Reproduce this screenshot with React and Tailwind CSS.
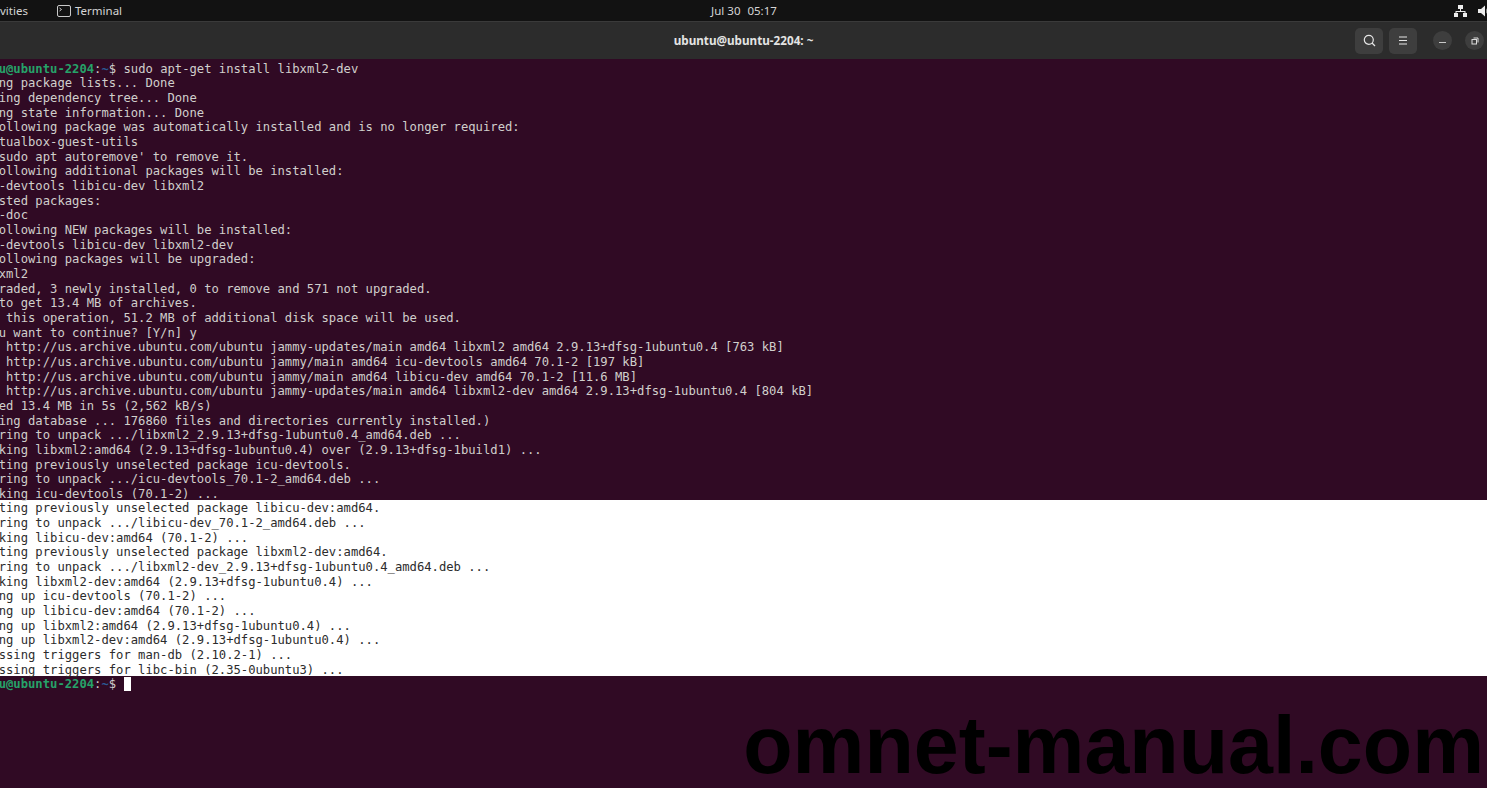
import React from "react";

const dark1 = [
  "Reading package lists... Done",
  "Building dependency tree... Done",
  "Reading state information... Done",
  "The following package was automatically installed and is no longer required:",
  "  virtualbox-guest-utils",
  "Use 'sudo apt autoremove' to remove it.",
  "The following additional packages will be installed:",
  "  icu-devtools libicu-dev libxml2",
  "Suggested packages:",
  "  icu-doc",
  "The following NEW packages will be installed:",
  "  icu-devtools libicu-dev libxml2-dev",
  "The following packages will be upgraded:",
  "  libxml2",
  "1 upgraded, 3 newly installed, 0 to remove and 571 not upgraded.",
  "Need to get 13.4 MB of archives.",
  "After this operation, 51.2 MB of additional disk space will be used.",
  "Do you want to continue? [Y/n] y",
  "Get:1 http://us.archive.ubuntu.com/ubuntu jammy-updates/main amd64 libxml2 amd64 2.9.13+dfsg-1ubuntu0.4 [763 kB]",
  "Get:2 http://us.archive.ubuntu.com/ubuntu jammy/main amd64 icu-devtools amd64 70.1-2 [197 kB]",
  "Get:3 http://us.archive.ubuntu.com/ubuntu jammy/main amd64 libicu-dev amd64 70.1-2 [11.6 MB]",
  "Get:4 http://us.archive.ubuntu.com/ubuntu jammy-updates/main amd64 libxml2-dev amd64 2.9.13+dfsg-1ubuntu0.4 [804 kB]",
  "Fetched 13.4 MB in 5s (2,562 kB/s)",
  "(Reading database ... 176860 files and directories currently installed.)",
  "Preparing to unpack .../libxml2_2.9.13+dfsg-1ubuntu0.4_amd64.deb ...",
  "Unpacking libxml2:amd64 (2.9.13+dfsg-1ubuntu0.4) over (2.9.13+dfsg-1build1) ...",
  "Selecting previously unselected package icu-devtools.",
  "Preparing to unpack .../icu-devtools_70.1-2_amd64.deb ...",
  "Unpacking icu-devtools (70.1-2) ...",
];

const light = [
  "Selecting previously unselected package libicu-dev:amd64.",
  "Preparing to unpack .../libicu-dev_70.1-2_amd64.deb ...",
  "Unpacking libicu-dev:amd64 (70.1-2) ...",
  "Selecting previously unselected package libxml2-dev:amd64.",
  "Preparing to unpack .../libxml2-dev_2.9.13+dfsg-1ubuntu0.4_amd64.deb ...",
  "Unpacking libxml2-dev:amd64 (2.9.13+dfsg-1ubuntu0.4) ...",
  "Setting up icu-devtools (70.1-2) ...",
  "Setting up libicu-dev:amd64 (70.1-2) ...",
  "Setting up libxml2:amd64 (2.9.13+dfsg-1ubuntu0.4) ...",
  "Setting up libxml2-dev:amd64 (2.9.13+dfsg-1ubuntu0.4) ...",
  "Processing triggers for man-db (2.10.2-1) ...",
  "Processing triggers for libc-bin (2.35-0ubuntu3) ...",
];

function Line({ children }) {
  return <div className="h-[14.68px] leading-[14.68px] whitespace-pre">{children}</div>;
}

function Prompt() {
  return (
    <>
      <span className="font-bold text-[#26a269]">ubuntu@ubuntu-2204</span>
      <span className="text-[#d0cfcc]">:</span>
      <span className="font-bold text-[#2a5a96]">~</span>
      <span className="text-[#d0cfcc]">$ </span>
    </>
  );
}

export default function App() {
  return (
    <div className="relative flex h-[788px] w-full flex-col overflow-hidden bg-[#300a24] font-['DejaVu_Sans_Mono',monospace]">
      <div className="grid h-[21px] shrink-0 grid-cols-[1fr_auto_1fr] items-center bg-[#121212] font-['Noto_Sans',sans-serif] text-[11.5px] text-[#d5d5d5]">
        <div className="flex items-center">
          <span className="-ml-[20px] w-[77px]">Activities</span>
          <svg width="14" height="12" viewBox="0 0 14 12" fill="none" className="mr-[4px]">
            <rect x="0.5" y="0.5" width="13" height="11" rx="1.5" stroke="#c9c9c9" />
            <path d="M2.5 3l2 1.5-2 1.5" stroke="#c9c9c9" />
          </svg>
          <span>Terminal</span>
        </div>
        <div className="flex gap-[7px] pl-[1px]">
          <span>Jul 30</span>
          <span>05:17</span>
        </div>
        <div className="-mr-[4px] flex items-center justify-end gap-[11px]">
          <svg width="13" height="12" viewBox="0 0 13 12" fill="#ececec">
            <rect x="4" y="0" width="5" height="4" />
            <rect x="0" y="8" width="4" height="4" />
            <rect x="9" y="8" width="4" height="4" />
            <path d="M6 4h1v2h4.500v2h-1V7H2.500v1h-1V6H6z" />
          </svg>
          <svg width="13" height="12" viewBox="0 0 13 12" fill="#ececec">
            <path d="M0 4h3l4-3.500v11L3 8H0z" />
            <path d="M8.500 3.500c1.200 1.200 1.200 3.800 0 5v-5z" />
          </svg>
        </div>
      </div>

      <div className="relative flex h-[38px] shrink-0 items-center justify-end border-t border-[#3a3a3a] bg-[#2c2c2c] pr-[3px]">
        <span className="absolute left-0 right-0 text-center font-['Noto_Sans',sans-serif] text-[11.7px] font-bold text-[#e4e4e4]">
          ubuntu@ubuntu-2204: ~
        </span>
        <div className="relative flex items-center">
          <div className="flex h-[26px] w-[28px] items-center justify-center rounded-[5px] bg-[#3e3e3e]">
            <svg width="13" height="13" viewBox="0 0 13 13" fill="none" stroke="#e6e6e6" strokeWidth="1.200">
              <circle cx="5.800" cy="5.800" r="4.500" />
              <path d="M9 9l3 3" />
            </svg>
          </div>
          <div className="ml-[6px] flex h-[26px] w-[28px] items-center justify-center rounded-[5px] bg-[#3e3e3e]">
            <svg width="10" height="9" viewBox="0 0 10 9" stroke="#e6e6e6" strokeWidth="1">
              <path d="M1 1h8M1 4.500h8M1 8h8" />
            </svg>
          </div>
          <div className="ml-[16px] flex h-[19px] w-[19px] items-center justify-center rounded-full bg-[#3e3e3e]">
            <div className="mt-[3px] h-[1px] w-[7px] bg-[#c8c8c8]" />
          </div>
          <div className="ml-[13px] flex h-[19px] w-[19px] items-center justify-center rounded-full bg-[#3e3e3e]">
            <svg width="8" height="8" viewBox="0 0 8 8" fill="none" stroke="#dcdcdc">
              <rect x="1" y="2.500" width="4.500" height="4.500" />
              <path d="M2.500 1H7v4.500" />
            </svg>
          </div>
        </div>
      </div>

      <div className="flex-1 overflow-hidden pt-[2.5px] text-[12.19px]">
        <div className="-ml-[38px] text-[#d0cfcc]">
          <Line>
            <Prompt />
            <span>sudo apt-get install libxml2-dev</span>
          </Line>
          {dark1.map((t, i) => (
            <Line key={i}>{t}</Line>
          ))}
        </div>
        <div className="-mt-[2px] h-[176px] bg-white pt-[1.6px] text-[#2c2c2c]">
          <div className="-ml-[38px]">
            {light.map((t, i) => (
              <Line key={i}>{t}</Line>
            ))}
          </div>
        </div>
        <div className="-ml-[38px] pt-[1px]">
          <Line>
            <Prompt />
            <span className="ml-[0.5px] inline-block h-[14.68px] w-[7.35px] bg-white align-top" />
          </Line>
        </div>
      </div>

      <div className="absolute -bottom-[2px] right-[3px] font-['Liberation_Sans',sans-serif] text-[80.8px] leading-[90px] font-bold whitespace-nowrap text-black">
        omnet-manual.com
      </div>
    </div>
  );
}
